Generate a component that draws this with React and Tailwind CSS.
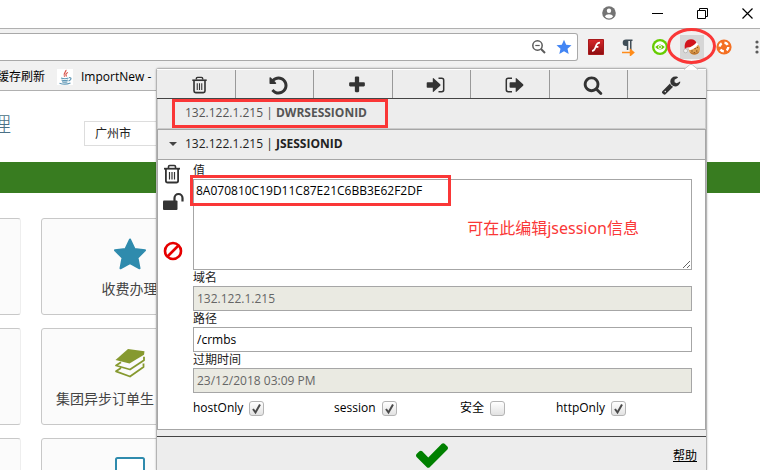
import React from "react";

const SANS = "font-['Open_Sans','Noto_Sans_CJK_SC',sans-serif]";

function Glyph({ d, className }) {
  return (
    <svg viewBox="0 0 1792 1792" fill="currentColor" className={className} aria-hidden="true">
      <path d={d} />
    </svg>
  );
}

const UNDO =
  "M1664 896q0 156-61 298t-164 245-245 164-298 61q-172 0-327-72.500t-264-204.500q-7-10-6.500-22.500t8.500-20.500l137-138q10-9 25-9 16 2 23 12 73 95 179 147t225 52q104 0 198.500-40.500t163.500-109.500 109.500-163.500 40.500-198.500-40.500-198.500-109.500-163.500-163.500-109.500-198.500-40.500q-98 0-188 35.500t-160 101.500l137 138q31 30 14 69-17 40-59 40h-448q-26 0-45-19t-19-45v-448q0-42 40-59 39-17 69 14l130 129q107-101 244.500-156.500t284.500-55.500q156 0 298 61t245 164 164 245 61 298z";
const PLUS =
  "M1600 736v192q0 40-28 68t-68 28h-416v416q0 40-28 68t-68 28h-192q-40 0-68-28t-28-68v-416h-416q-40 0-68-28t-28-68v-192q0-40 28-68t68-28h416v-416q0-40 28-68t68-28h192q40 0 68 28t28 68v416h416q40 0 68 28t28 68z";
const SEARCH =
  "M1216 832q0-185-131.500-316.500t-316.500-131.500-316.500 131.500-131.500 316.500 131.500 316.500 316.500 131.500 316.500-131.500 131.500-316.500zm512 832q0 52-38 90t-90 38q-54 0-90-38l-343-342q-179 124-399 124-143 0-273.500-55.500t-225-150-150-225-55.500-273.500 55.500-273.500 150-225 225-150 273.500-55.500 273.500 55.500 225 150 150 225 55.500 273.500q0 220-124 399l343 343q37 37 37 90z";
const WRENCH =
  "M448 1472q0-26-19-45t-45-19-45 19-19 45 19 45 45 19 45-19 19-45zm644-420l-682 682q-37 37-90 37-52 0-91-37l-106-108q-38-36-38-90 0-53 38-91l681-681q39 98 114.500 173.500t173.500 114.500zm634-435q0 39-23 106-47 134-164.500 217.500t-258.500 83.500q-185 0-316.500-131.500t-131.500-316.500 131.500-316.500 316.500-131.500q58 0 121.500 16.500t107.500 46.500q16 11 16 28t-16 28l-293 169v224l193 107q5-3 79-48.500t135.500-81 70.500-35.500q15 0 23.500 10t8.500 25z";
const CHECK =
  "M1671 566q0 40-28 68l-724 724-136 136q-28 28-68 28t-68-28l-136-136-362-362q-28-28-28-68t28-68l136-136q28-28 68-28t68 28l294 295 656-657q28-28 68-28t68 28l136 136q28 28 28 68z";

function Trash({ className }) {
  return (
    <svg viewBox="0 0 18 20" fill="none" stroke="currentColor" className={className} aria-hidden="true">
      <path d="M5.500 4V2.700Q5.500 1.500 6.700 1.500h4.600q1.200 0 1.200 1.200V4" strokeWidth="1.600" />
      <path d="M1 4.700h16" strokeWidth="1.800" />
      <path d="M2.900 5v11.700q0 1.800 1.800 1.800h8.600q1.800 0 1.800-1.800V5" strokeWidth="1.800" />
      <path d="M6.500 8v7.500M9 8v7.500M11.500 8v7.500" strokeWidth="1.200" />
    </svg>
  );
}

function SignIn({ className }) {
  return (
    <svg viewBox="0 0 20 18" className={className} aria-hidden="true">
      <path d="M1.500 6.300h5.300V2.600q0-1 .8-.3l6.600 6q.7.700 0 1.400l-6.600 6q-.8.700-.8-.3v-3.700H1.500q-.8 0-.8-.8V7.100q0-.8.8-.8z" fill="currentColor" />
      <path d="M12.500 2.300h3.300q1.900 0 1.900 1.900v9.600q0 1.900-1.900 1.900h-3.300" fill="none" stroke="currentColor" strokeWidth="1.500" />
    </svg>
  );
}

function SignOut({ className }) {
  return (
    <svg viewBox="0 0 20 18" className={className} aria-hidden="true">
      <path d="M6.400 6.300h5.300V2.600q0-1 .8-.3l6.600 6q.7.700 0 1.400l-6.600 6q-.8.700-.8-.3v-3.700H6.400q-.8 0-.8-.8V7.100q0-.8.8-.8z" fill="currentColor" />
      <path d="M8 2.300H4.200q-1.900 0-1.900 1.900v9.600q0 1.900 1.900 1.900H8" fill="none" stroke="currentColor" strokeWidth="1.500" />
    </svg>
  );
}

const TOOLS = [
  { label: "Delete all", icon: <Trash className="h-[18px] w-[17px]" /> },
  { label: "Reset", icon: <Glyph d={UNDO} className="size-[21px]" /> },
  { label: "Add", icon: <Glyph d={PLUS} className="size-5" /> },
  { label: "Import", icon: <SignIn className="h-[18px] w-5" /> },
  { label: "Export", icon: <SignOut className="h-[18px] w-5" /> },
  { label: "Search", icon: <Glyph d={SEARCH} className="size-5" /> },
  { label: "Options", icon: <Glyph d={WRENCH} className="size-5" /> },
];

function WindowControls() {
  return (
    <div className="flex h-7 shrink-0 items-center justify-end gap-[34px] bg-white pr-[7px] pb-[2px] text-black">
      <button aria-label="Profile" className="flex w-[18px] justify-center">
        <svg viewBox="0 0 14 14" className="size-[14px]">
          <circle cx="7" cy="7" r="6.800" fill="#737373" />
          <circle cx="7" cy="4.800" r="2.200" fill="#fff" />
          <path d="M2.800 10.200Q4 8.200 7 8.200t4.200 2Q9.800 12.400 7 12.400t-4.200-2.200z" fill="#fff" />
        </svg>
      </button>
      <button aria-label="Minimize">
        <svg viewBox="0 0 11 11" className="size-[11px]"><path d="M0 5.500h11" stroke="currentColor" /></svg>
      </button>
      <button aria-label="Restore">
        <svg viewBox="0 0 11 11" fill="none" stroke="currentColor" className="size-[11px]">
          <path d="M.5 2.500h8v8h-8zM2.500 2.500v-2h8v8h-2" />
        </svg>
      </button>
      <button aria-label="Close">
        <svg viewBox="0 0 11 11" stroke="currentColor" strokeWidth="1.200" className="size-[11px]">
          <path d="M.5.500l10 10M10.500.500l-10 10" />
        </svg>
      </button>
    </div>
  );
}

function Flash() {
  return (
    <svg viewBox="0 0 16 16" className="size-4">
      <defs>
        <linearGradient id="flash" x1="0" y1="0" x2="0" y2="1">
          <stop offset="0" stopColor="#d8282c" />
          <stop offset="1" stopColor="#8c0d10" />
        </linearGradient>
      </defs>
      <path d="M.5.500h15v15H.5z" fill="url(#flash)" stroke="#a81a1c" />
      <path d="M12 3.600C8.500 3.600 8.300 6 7.500 8.200 6.800 10.400 6.200 11.900 4 12M7.400 7.900h3" fill="none" stroke="#fff" strokeWidth="1.700" />
    </svg>
  );
}

function Pilcrow() {
  return (
    <svg viewBox="0 0 16 18" className="h-[18px] w-4">
      <path d="M12.500 1.500H6a3.300 3.300 0 0 0 0 6.600h.8V12h1.500V3H10v9h1.500V3h1z" fill="#3f4d57" />
      <path d="M2 14.500h10M10.500 11.700l3.200 2.800-3.200 2.800z" fill="#ff8c1a" stroke="#ff8c1a" strokeWidth="1.500" />
    </svg>
  );
}

function GreenEye() {
  return (
    <svg viewBox="0 0 16 16" className="size-4">
      <circle cx="8" cy="8" r="8" fill="#66cc00" />
      <circle cx="8" cy="8" r="5.700" fill="#fff" />
      <path d="M3.200 8Q8 2.800 12.800 8 8 13.200 3.200 8z" fill="#66cc00" />
      <circle cx="8" cy="8" r="1.900" fill="#fff" />
      <circle cx="8" cy="8" r="1" fill="#66cc00" />
    </svg>
  );
}

function SantaCookie() {
  return (
    <svg viewBox="0 0 18 18" className="size-[18px]">
      <circle cx="11.300" cy="11" r="5.700" fill="#e0a050" />
      <path d="M6.500 14a5.700 5.700 0 0 0 10-.8q-4 2.600-10 .8z" fill="#bd7630" />
      <g fill="#7a4516">
        <circle cx="9" cy="13" r=".7" /><circle cx="12" cy="10.500" r=".7" />
        <circle cx="14.500" cy="9.500" r=".6" /><circle cx="13.800" cy="13" r=".7" /><circle cx="11.300" cy="14.500" r=".6" />
      </g>
      <path d="M2 11.500C.8 6 3 1.200 8 1.200c3.200 0 5 1.800 5.700 4L6.500 9.500Q3.300 8.500 2 11.500z" fill="#d2141c" />
      <path d="M5.300 9.800Q10.500 8.500 13.600 4.200l1.600 2.200Q12 11 6.500 12.300z" fill="#fff" />
      <circle cx="2.600" cy="12.800" r="2" fill="#f2f2f2" stroke="#999" strokeWidth=".5" />
    </svg>
  );
}

function OrangeRing() {
  return (
    <svg viewBox="0 0 16 16" className="size-4">
      <circle cx="8" cy="8" r="7.600" fill="#f47023" />
      <circle cx="8" cy="8" r="4.300" fill="none" stroke="#fff" strokeWidth="2.400" strokeDasharray="3.800 2.955" strokeDashoffset="0" />
      <circle cx="8" cy="8" r="2.200" fill="#f47023" />
    </svg>
  );
}

function AddressBar() {
  return (
    <div className="flex h-8 items-center">
      <div className="flex h-7 flex-1 items-center justify-end gap-2 rounded-r-[3px] border border-l-0 border-[#a9a9a9] bg-white pr-[5px]">
        <input aria-label="Address" className="min-w-0 flex-1 bg-transparent outline-none" />
        <button aria-label="Zoom" className="pr-px">
          <svg viewBox="0 0 16 16" fill="none" stroke="#5a5a5a" className="size-4">
            <circle cx="6.500" cy="6.500" r="4.700" strokeWidth="1.500" />
            <path d="M10 10l4 4" strokeWidth="2" />
            <path d="M4.300 6.500h4.400" strokeWidth="1.200" />
          </svg>
        </button>
        <button aria-label="Bookmark">
          <svg viewBox="0 0 16 16" className="size-4">
            <path d="M8 .8l2.200 5 5.300.5-4 3.500 1.200 5.300L8 12.300l-4.700 2.800 1.200-5.300-4-3.500 5.300-.5z" fill="#4285f4" />
          </svg>
        </button>
      </div>
      <div className="ml-[2px] flex items-center">
        <button aria-label="Flash" className="flex w-8 justify-center"><Flash /></button>
        <button aria-label="Paragraph" className="flex w-8 justify-center"><Pilcrow /></button>
        <button aria-label="Viewer" className="flex w-8 justify-center"><GreenEye /></button>
        <div className="flex w-8 justify-center">
          <button aria-label="EditThisCookie" className="flex size-6 items-center justify-center bg-[#d6d6d6]"><SantaCookie /></button>
        </div>
        <button aria-label="Rescue" className="flex w-8 justify-center"><OrangeRing /></button>
        <button aria-label="Menu" className="flex w-5 justify-end">
          <svg viewBox="0 0 6 16" fill="#5a5a5a" className="h-4 w-[6px]">
            <circle cx="3" cy="3" r="1.600" /><circle cx="3" cy="8" r="1.600" /><circle cx="3" cy="13" r="1.600" />
          </svg>
        </button>
      </div>
    </div>
  );
}

function BookmarksBar() {
  return (
    <div className="flex h-[27px] items-center whitespace-nowrap text-xs text-black">
      <a href="#refresh" className="-ml-[3px]">缓存刷新</a>
      <a href="#importnew" className="ml-3 flex items-center gap-2">
        <svg viewBox="0 0 16 16" fill="none" className="size-4 bg-white">
          <path d="M9 .8C9.500 3 5.500 4 7.500 7.800M11 3.500C8.500 4.500 8.500 5.500 9.500 7.500" stroke="#d9534a" strokeWidth="1.200" />
          <path d="M4 9q4 1.500 7.500 0M4.500 11q3.500 1.300 6.500 0M5 12.700q3 1 5.500 0M2.500 14.200q5.500 2 11-.2M12 8.500q3 .2 1.500 2.200-.8 1-2 1.300" stroke="#5f97b5" strokeWidth="1.100" />
        </svg>
        ImportNew -
      </a>
    </div>
  );
}

function StackIcon() {
  return (
    <svg viewBox="0 0 32 32" className="size-8">
      <path d="M14 2l16.500 2.300-.5 3.500L15.500 16.500 1.500 13z" fill="#86992f" />
      <path d="M7 15.200l-5 3.300 14 4L30 13.200v-3.400M7 21l-5 3.300 14 5.200 13.500-9.500v-3.400" fill="none" stroke="#86992f" strokeWidth="1.800" strokeLinejoin="round" />
    </svg>
  );
}

function Tile({ icon, children, className = "" }) {
  return (
    <div className={`flex h-[97px] flex-col items-center rounded-[3px] border border-[#c8c8c8] bg-[#fbfbfb] pt-[18px] text-sm text-[#444] ${className}`}>
      {icon}
      <div className="mt-2 whitespace-nowrap">{children}</div>
    </div>
  );
}

function Page() {
  return (
    <main className="shrink-0 bg-white">
      <header className="flex h-[71px] items-start pt-5">
        <h1 className="-ml-[9px] w-5 text-xl leading-7 font-light text-[#4a7186]">理</h1>
        <select aria-label="城市" className="mt-[10px] ml-[73px] h-[25px] w-[120px] appearance-none border border-[#ddd] bg-white px-[10px] text-xs text-[#222]">
          <option>广州市</option>
        </select>
      </header>
      <div className="h-[31px] bg-[#387c20]" />
      <div className="grid grid-cols-[21px_177px] gap-x-5 gap-y-[13px] pt-[25px]">
        <Tile className="rounded-l-none border-l-0 border-r-[#eee]" />
        <Tile
          icon={
            <svg viewBox="0 0 34 34" className="size-[34px]">
              <path d="M17 2.500l4.500 9.500 10.500 1.300-7.500 7.500 2 10.500L17 26.200l-9.500 5.100 2-10.500L2 13.300 12.500 12z" fill="#2f8bad" stroke="#2f8bad" strokeWidth="2" strokeLinejoin="round" />
            </svg>
          }
        >
          收费办理
        </Tile>
        <Tile className="rounded-l-none border-l-0 border-r-[#eee]" />
        <Tile className="items-stretch px-[14px]" icon={<div className="flex h-[34px] justify-center"><StackIcon /></div>}>
          集团异步订单生
        </Tile>
        <Tile className="rounded-l-none border-l-0 border-r-[#eee]" />
        <Tile icon={<svg viewBox="0 0 30 30" className="size-[30px]"><rect x="1" y="1" width="28" height="20" rx="1.500" fill="#fff" stroke="#2f8bad" strokeWidth="2" /></svg>} />
      </div>
    </main>
  );
}

function Field({ id, label, value, muted }) {
  return (
    <div className="flex flex-col">
      <label htmlFor={id} className="h-4 leading-4">{label}</label>
      <input
        id={id}
        defaultValue={value}
        disabled={muted}
        className="h-[25px] border border-[#a6a6a6] px-[3px] text-xs text-black outline-none disabled:bg-[#eaeae2] disabled:text-[#666]"
      />
    </div>
  );
}

function Flag({ label, checked }) {
  return (
    <label className="flex items-center gap-[6px]">
      {label}
      <span className="relative flex">
        <input
          type="checkbox"
          defaultChecked={checked}
          className="peer size-[15px] appearance-none rounded-[3px] border border-[#b4b4b4] bg-linear-to-b from-white to-[#e2e2e2]"
        />
        <svg viewBox="0 0 15 15" className="pointer-events-none absolute inset-0 hidden size-[15px] peer-checked:block">
          <path d="M4 8l2.500 3.500L11 3.500" fill="none" stroke="#4a4a4a" strokeWidth="2" />
        </svg>
      </span>
    </label>
  );
}

function CookiePopup() {
  return (
    <section className="absolute top-[68px] right-[53px] bottom-0 flex w-[551px] flex-col rounded-t-[3px] border border-b-0 border-[#b4b4b4] bg-[#ededed] text-xs text-[#222] shadow-[0_0_2px_rgba(0,0,0,0.3)]">
      <svg viewBox="0 0 14 6" className="absolute -top-[5px] right-2 h-[6px] w-[14px]">
        <path d="M0 5.500l6-5h2l6 5" fill="#fff" stroke="#c4c4c4" />
        <path d="M1 6l5.500-5h1L13 6z" fill="#fff" />
      </svg>
      <nav className="flex h-[30px] border-t border-b border-t-white border-b-[#444] text-[#333]">
        {TOOLS.map((tool) => (
          <button key={tool.label} aria-label={tool.label} className="flex flex-1 items-center justify-center border-r border-[#999] pt-[2px] pl-2 last:border-r-0">
            {tool.icon}
          </button>
        ))}
      </nav>
      <h2 className="flex h-[30px] items-center border border-t-0 border-[#ccc] pb-px pl-[27px] text-[#555]">
        <span className="whitespace-pre">132.122.1.215 | <b>DWRSESSIONID</b></span>
      </h2>
      <h2 className="flex h-[31px] items-center gap-2 border border-[#a6a6a6] pb-[2px] pl-[11px]">
        <svg viewBox="0 0 8 4" className="h-1 w-2"><path d="M0 0h8L4 4z" fill="#444" /></svg>
        <span className="whitespace-pre">132.122.1.215 | <b>JSESSIONID</b></span>
      </h2>
      <div className="flex border border-t-0 border-[#a6a6a6] bg-white pt-[3px] pr-[13px] pb-[13px] pl-[5px]">
        <div className="flex w-[30px] flex-col items-start text-[#333]">
          <button aria-label="删除" className="mt-px"><Trash className="h-5 w-[18px]" /></button>
          <button aria-label="锁定" className="mt-2">
            <svg viewBox="0 0 22 19" className="h-[19px] w-[22px]">
              <rect x="0" y="8.500" width="14.500" height="9.500" rx="1" fill="currentColor" />
              <path d="M11.500 9V6a4 4 0 0 1 8 0v3.500" fill="none" stroke="currentColor" strokeWidth="2.200" />
            </svg>
          </button>
          <button aria-label="禁用" className="mt-[30px]">
            <svg viewBox="0 0 20 20" fill="none" stroke="#e60000" strokeWidth="2.600" className="size-5">
              <circle cx="10" cy="10" r="8" />
              <path d="M4.500 15.500l11-11" />
            </svg>
          </button>
        </div>
        <form className="flex min-w-0 flex-1 flex-col">
          <label htmlFor="value" className="h-4 leading-4">值</label>
          <textarea
            id="value"
            defaultValue="8A070810C19D11C87E21C6BB3E62F2DF"
            className="h-[91px] border border-[#a6a6a6] px-[2px] py-[3px] text-xs text-black outline-none"
          />
          <Field id="domain" label="域名" value="132.122.1.215" muted />
          <Field id="path" label="路径" value="/crmbs" />
          <Field id="expiration" label="过期时间" value="23/12/2018 03:09 PM" muted />
          <div className="mt-[7px] grid grid-cols-[141fr_126fr_96fr_136fr] leading-4 text-black">
            <Flag label="hostOnly" checked />
            <Flag label="session" checked />
            <Flag label="安全" />
            <Flag label="httpOnly" checked />
          </div>
        </form>
      </div>
      <footer className="mt-[6px] grid flex-1 grid-cols-3 items-center border-t border-[#444]">
        <button aria-label="保存" className="col-start-2 justify-self-center pt-1 text-[#008000]">
          <svg viewBox="121 334 1550 1188" fill="currentColor" className="h-[25px] w-8"><path d={CHECK} /></svg>
        </button>
        <a href="#help" className="mr-[9px] justify-self-end pt-1 text-black underline">帮助</a>
      </footer>
    </section>
  );
}

function Annotations() {
  return (
    <div className="pointer-events-none">
      <div className="absolute top-7 right-[44px] h-9 w-[49px] rounded-[50%] border-3 border-[#fa3737]" />
      <div className="absolute top-[99px] right-[372px] h-[29px] w-[216px] border-3 border-[#fa3737]" />
      <div className="absolute top-[175px] right-[309px] h-[31px] w-[261px] border-3 border-[#fa3737]" />
      <p className="absolute top-[216px] right-[121px] text-base whitespace-nowrap text-[#fa3737] font-['Noto_Sans','Noto_Sans_CJK_SC',sans-serif]">
        可在此编辑jsession信息
      </p>
    </div>
  );
}

export default function App() {
  return (
    <div className={`relative flex h-screen flex-col overflow-hidden ${SANS}`}>
      <WindowControls />
      <div className="shrink-0 border-t border-b border-[#b0b0b0] bg-[#f1f1f1] pt-[2px]">
        <AddressBar />
        <BookmarksBar />
      </div>
      <Page />
      <CookiePopup />
      <Annotations />
    </div>
  );
}
